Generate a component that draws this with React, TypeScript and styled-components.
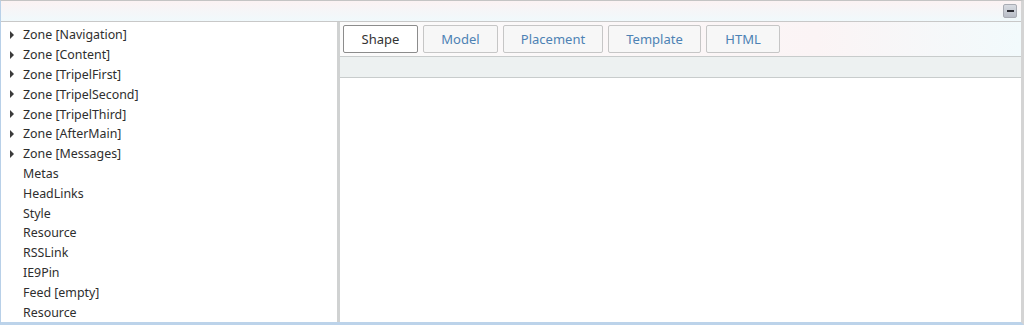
import * as React from 'react';
import styled, { createGlobalStyle } from 'styled-components';

const GlobalStyle = createGlobalStyle`
  html, body {
    margin: 0;
    padding: 0;
    background: #ffffff;
  }
  body {
    font-family: 'Noto Sans', 'Open Sans', sans-serif;
    font-size: 12px;
    color: #333333;
  }
`;

const Frame = styled.div`
  width: 1024px;
  height: 325px;
  box-sizing: border-box;
  display: flex;
  flex-direction: column;
  border-left: 1px solid #b8d0e8;
  border-top: 1px solid #c4c4c4;
  border-bottom: 3px solid #bcd3ea;
  border-right: 3px solid #d4d4d4;
  overflow: hidden;
`;

const Header = styled.div`
  height: 20px;
  flex-shrink: 0;
  display: flex;
  align-items: center;
  justify-content: flex-end;
  padding-right: 4px;
  background: linear-gradient(#fbf2f3, #f0f9fc);
  border-bottom: 1px solid #c8c8c8;
`;

const MinButton = styled.div`
  width: 14px;
  height: 14px;
  box-sizing: border-box;
  border-radius: 2px;
  border: 1px solid #a9acb4;
  background: linear-gradient(#d8dbe2, #b9bdc7);
  display: flex;
  align-items: center;
  justify-content: center;
  &::after {
    content: '';
    width: 7px;
    height: 2px;
    background: #2d2d35;
  }
`;

const Body = styled.div`
  flex: 1;
  display: flex;
  min-height: 0;
`;

const TreePanel = styled.div`
  width: 336px;
  flex-shrink: 0;
  padding-top: 3px;
  border-right: 3px solid #d0d2d2;
`;

const TreeRow = styled.div`
  height: 19.8px;
  display: flex;
  align-items: center;
  padding-left: 8px;
  white-space: nowrap;
`;

const Toggle = styled.span<{ $hidden?: boolean }>`
  width: 14px;
  display: flex;
  align-items: center;
  visibility: ${p => (p.$hidden ? 'hidden' : 'visible')};
  &::before {
    content: '';
    width: 0;
    height: 0;
    border-top: 4px solid transparent;
    border-bottom: 4px solid transparent;
    border-left: 4px solid #3a3a3a;
    margin-left: 1px;
  }
`;

const Label = styled.span`
  font-size: 12.4px;
  color: #2e2e2e;
`;

const DetailPanel = styled.div`
  flex: 1;
  display: flex;
  flex-direction: column;
`;

const TabStrip = styled.div`
  height: 34px;
  box-sizing: border-box;
  display: flex;
  gap: 5px;
  padding: 3px 0 0 3px;
  background: linear-gradient(90deg, #fbfbfb, #fbf4f5 70%, #f2fafc);
`;

const Tab = styled.div<{ $active?: boolean; $w: number }>`
  width: ${p => p.$w}px;
  height: 28px;
  box-sizing: border-box;
  display: flex;
  align-items: center;
  justify-content: center;
  border-radius: 2px;
  border: 1px solid ${p => (p.$active ? '#8c8c8c' : '#c6c6c6')};
  background: ${p => (p.$active ? '#ffffff' : '#f7f7f7')};
  color: ${p => (p.$active ? '#333333' : '#4d82b4')};
  font-size: 13px;
`;

const SubBar = styled.div`
  height: 20px;
  flex-shrink: 0;
  background: #edf1f1;
  border-top: 1px solid #c8cccc;
  border-bottom: 1px solid #c8cccc;
`;

const Content = styled.div`
  flex: 1;
  background: #ffffff;
`;

const treeItems: { label: string; expandable: boolean }[] = [
  { label: 'Zone [Navigation]', expandable: true },
  { label: 'Zone [Content]', expandable: true },
  { label: 'Zone [TripelFirst]', expandable: true },
  { label: 'Zone [TripelSecond]', expandable: true },
  { label: 'Zone [TripelThird]', expandable: true },
  { label: 'Zone [AfterMain]', expandable: true },
  { label: 'Zone [Messages]', expandable: true },
  { label: 'Metas', expandable: false },
  { label: 'HeadLinks', expandable: false },
  { label: 'Style', expandable: false },
  { label: 'Resource', expandable: false },
  { label: 'RSSLink', expandable: false },
  { label: 'IE9Pin', expandable: false },
  { label: 'Feed [empty]', expandable: false },
  { label: 'Resource', expandable: false },
];

const tabs = [
  { label: 'Shape', w: 75 },
  { label: 'Model', w: 75 },
  { label: 'Placement', w: 100 },
  { label: 'Template', w: 93 },
  { label: 'HTML', w: 74 },
];

const App = () => {
  return (
    <>
      <GlobalStyle />
      <Frame>
        <Header>
          <MinButton />
        </Header>
        <Body>
          <TreePanel>
            {treeItems.map((item, i) => (
              <TreeRow key={i}>
                <Toggle $hidden={!item.expandable} />
                <Label>{item.label}</Label>
              </TreeRow>
            ))}
          </TreePanel>
          <DetailPanel>
            <TabStrip>
              {tabs.map((t, i) => (
                <Tab key={t.label} $w={t.w} $active={i === 0}>
                  {t.label}
                </Tab>
              ))}
            </TabStrip>
            <SubBar />
            <Content />
          </DetailPanel>
        </Body>
      </Frame>
    </>
  );
};

export default App;
